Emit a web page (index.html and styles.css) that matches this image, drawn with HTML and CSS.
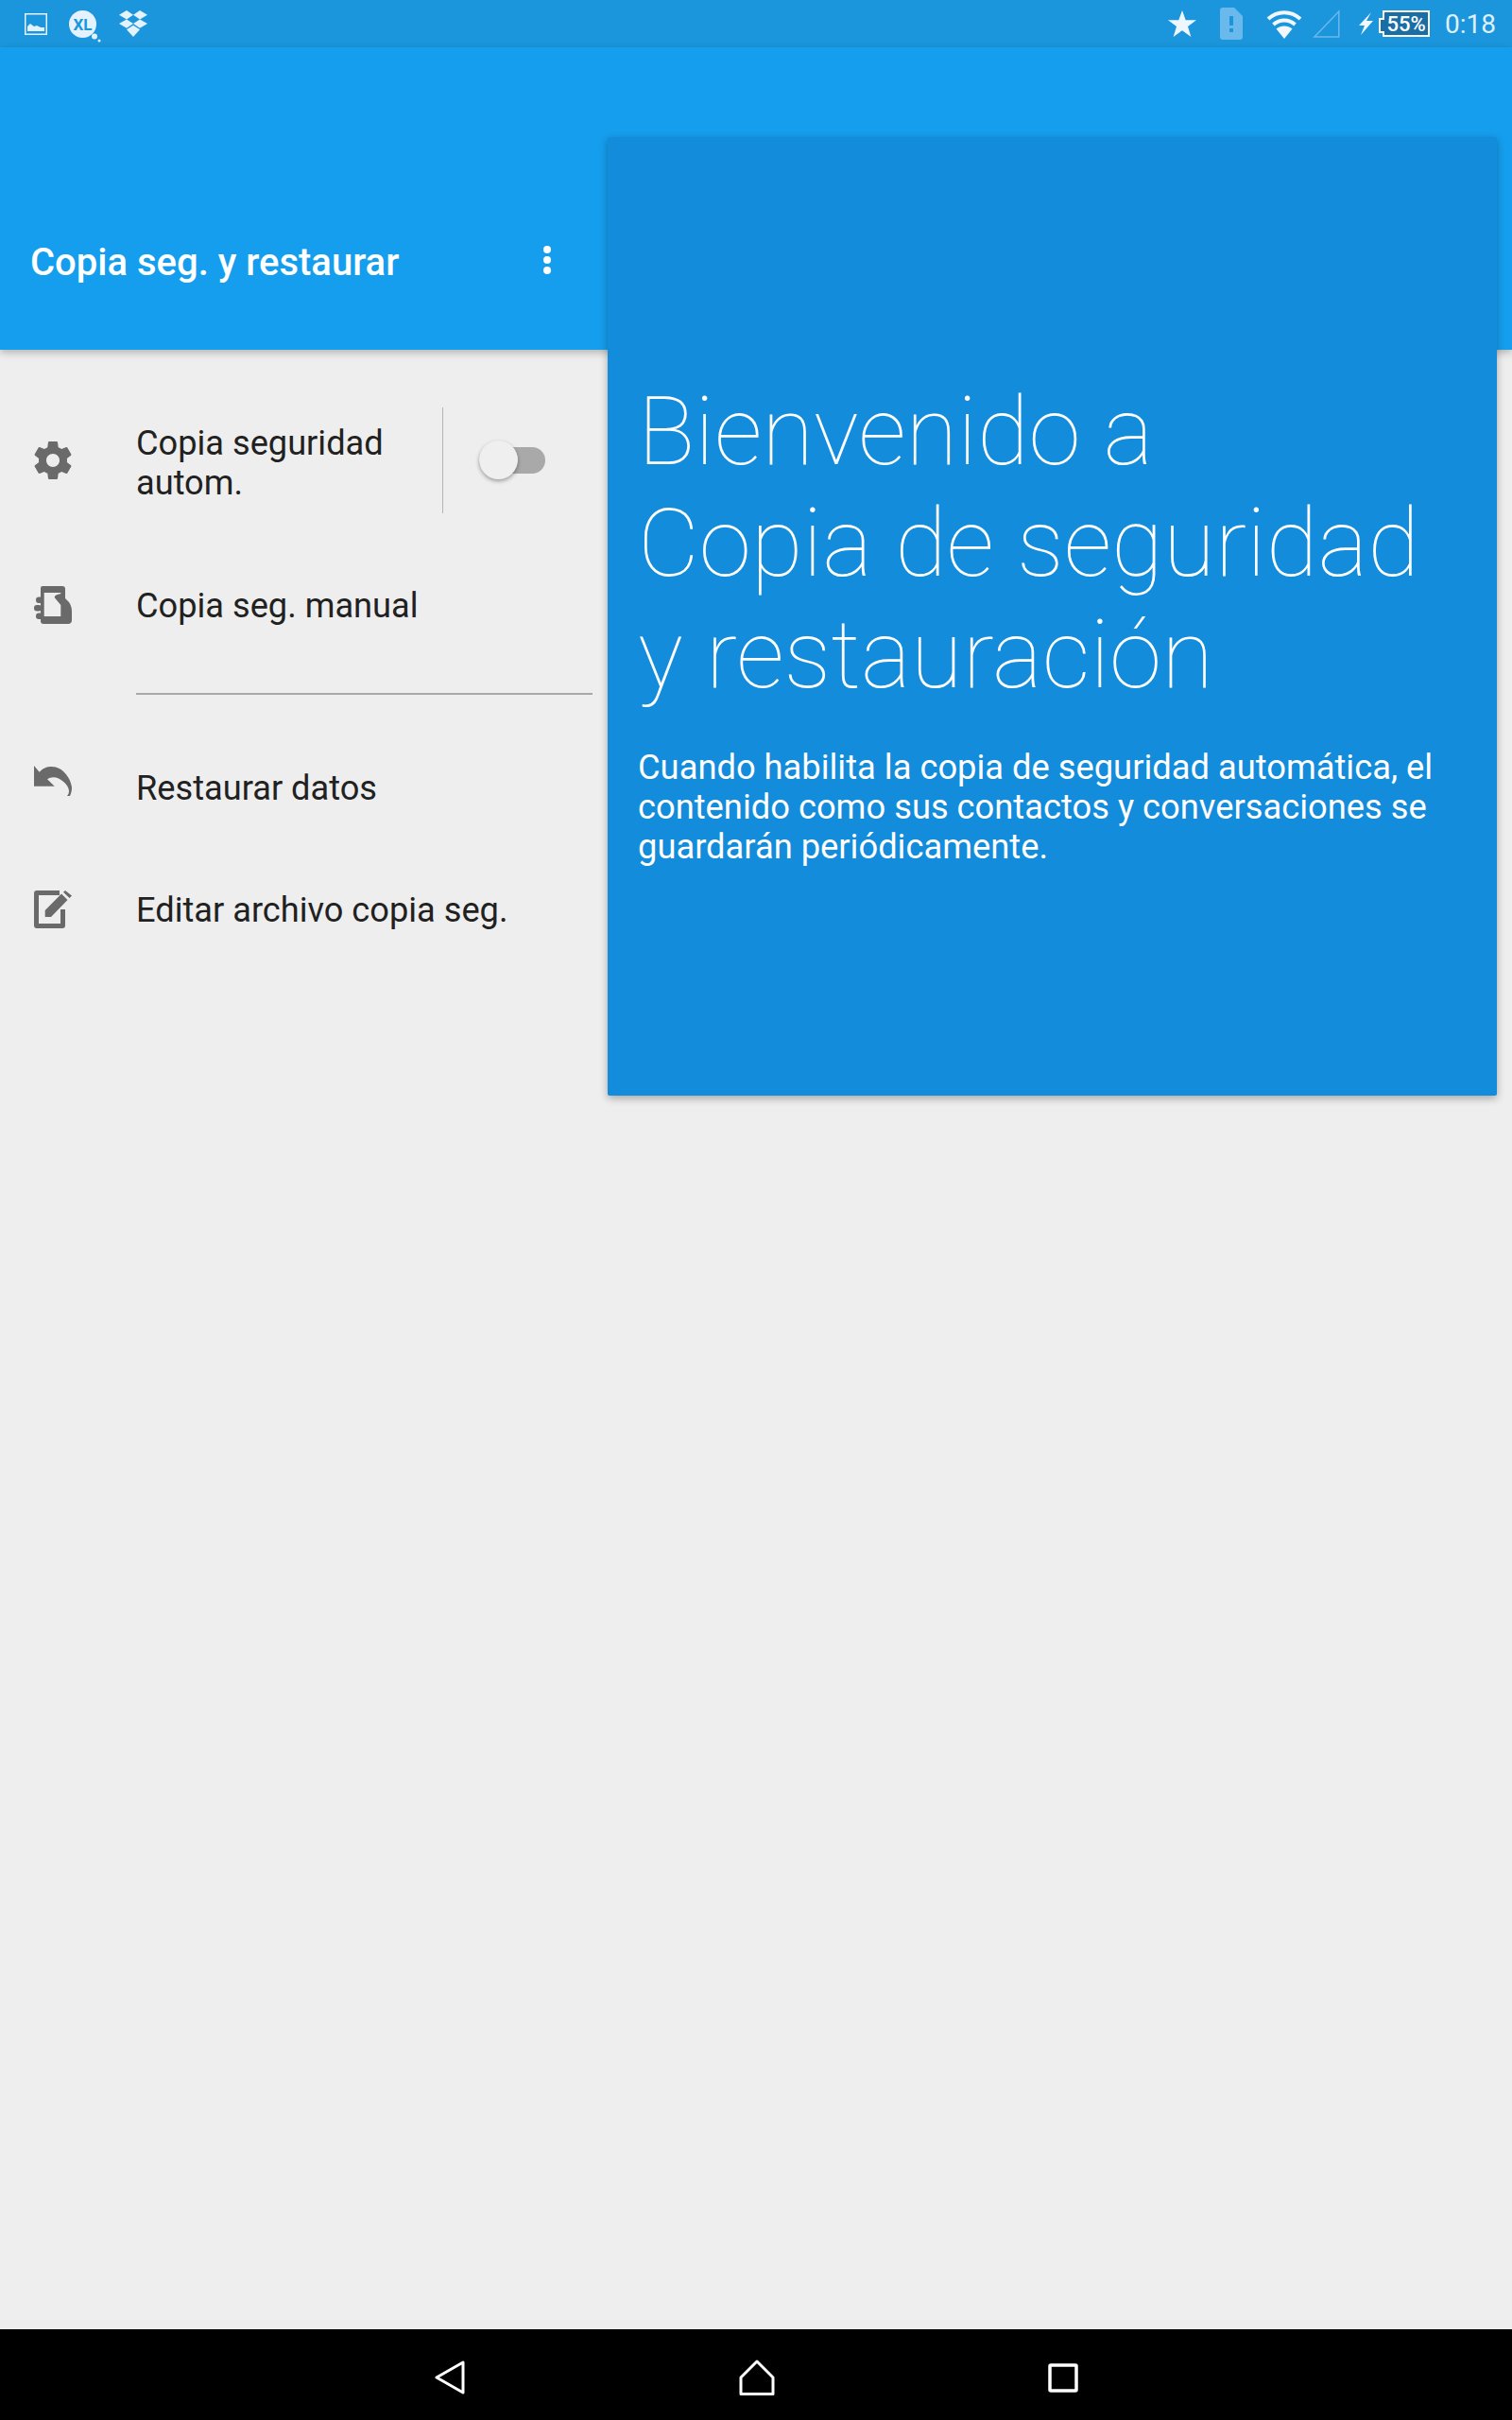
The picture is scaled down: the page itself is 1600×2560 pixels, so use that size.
FILE: index.html
```html
<!DOCTYPE html>
<html lang="es">
<head>
    <meta charset="UTF-8">
    <title>Copia seg. y restaurar</title>
    <link rel="stylesheet" href="styles.css">
</head>
<body>
    <div class="status-bar">
        <div class="status-left">
            <svg class="ic-image" viewBox="0 0 24 23"><path fill="none" stroke="#e3f2fc" stroke-width="1.5" d="M.75.75h22.500v21.500H.75z"/><path fill="#e3f2fc" d="M3 19v-5l3-3 4 3 3-1 4 2 4 0v4z"/></svg>
            <svg class="ic-xl" viewBox="0 0 34 34"><circle cx="14.500" cy="14.500" r="14.500" fill="#e3f2fc"/><circle cx="27" cy="27.500" r="3" fill="#e3f2fc"/><circle cx="32" cy="32" r="1.500" fill="#e3f2fc"/><text x="14.500" y="20.500" text-anchor="middle" class="xl-text">XL</text></svg>
            <svg class="ic-dropbox" viewBox="0 0 30 28"><path fill="#e3f2fc" d="M8 0l7 4.700-7 4.700-8-4.700zM22 0l8 4.700-8 4.700-7-4.700zM0 14.100l8-4.700 7 4.700-7 4.700zM22 9.400l8 4.700-8 4.700-7-4.700zM8 20.200l7-4.500 7 4.500-7 7.800z"/></svg>
        </div>
        <div class="status-right">
            <svg class="ic-star" viewBox="0 0 30 28"><path fill="#eef7fd" d="M15 0l3.700 10.200H30l-9 6.700 3.400 11L15 21.200 5.600 27.900l3.400-11-9-6.700h11.300z"/></svg>
            <svg class="ic-sd" viewBox="0 0 24 34"><path fill="#6ab9ec" d="M3 0h12l9 9v22a3 3 0 0 1-3 3H3a3 3 0 0 1-3-3V3a3 3 0 0 1 3-3z"/><path fill="#1b96dc" d="M10 9h4v10h-4zM10 22h4v4h-4z"/></svg>
            <svg class="ic-wifi" viewBox="0 0 38 31"><path fill="none" stroke="#f0f8fd" stroke-width="4" d="M2 10c10-9 24-9 34 0M7.500 16c7-6 16-6 23 0"/><path fill="#f0f8fd" d="M10.500 20.500c5-4 12-4 17 0L19 31z"/></svg>
            <svg class="ic-signal" viewBox="0 0 29 30"><path fill="none" stroke="#6ab9ec" stroke-width="1.500" d="M27.800 2v27H2z"/></svg>
            <svg class="ic-bolt" viewBox="0 0 16 24"><path fill="#f0f8fd" d="M14 0L1 14h6L3 24 16 9H9z"/></svg>
            <div class="battery"><span class="battery-text">55%</span></div>
            <span class="clock">0:18</span>
        </div>
    </div>

    <header class="app-bar">
        <h1 class="app-title">Copia seg. y restaurar</h1>
        <div class="overflow-menu">
            <span class="dot"></span>
            <span class="dot"></span>
            <span class="dot"></span>
        </div>
    </header>

    <main class="content">
        <div class="menu">
            <div class="row row-auto">
                <svg class="row-icon" viewBox="2.500 2 19 20"><path d="M19.430 12.980c.04-.32.07-.64.07-.98s-.03-.66-.07-.98l2.110-1.650c.19-.15.24-.42.12-.64l-2-3.460c-.12-.22-.39-.3-.61-.22l-2.490 1c-.52-.4-1.080-.73-1.690-.98l-.38-2.650C14.460 2.180 14.250 2 14 2h-4c-.25 0-.46.18-.49.42l-.38 2.650c-.61.25-1.170.59-1.690.98l-2.490-1c-.23-.09-.49 0-.61.22l-2 3.460c-.13.22-.07.49.12.64l2.110 1.650c-.04.32-.07.65-.07.98s.03.66.07.98l-2.110 1.650c-.19.15-.24.42-.12.64l2 3.460c.12.22.39.3.61.22l2.490-1c.52.4 1.080.73 1.690.98l.38 2.650c.03.24.24.42.49.42h4c.25 0 .46-.18.49-.42l.38-2.650c.61-.25 1.170-.59 1.690-.98l2.490 1c.23.09.49 0 .61-.22l2-3.460c.12-.22.07-.49-.12-.64l-2.110-1.650zM12 15.500c-1.930 0-3.500-1.570-3.500-3.500s1.570-3.500 3.500-3.500 3.500 1.570 3.500 3.500-1.570 3.500-3.500 3.500z"/></svg>
                <span class="row-label row-label-auto">Copia seguridad<br>autom.</span>
                <span class="v-divider"></span>
                <span class="switch"><span class="switch-thumb"></span></span>
            </div>
            <div class="row row-manual">
                <svg class="row-icon" viewBox="0 0 40 40"><rect x="2" y="11.500" width="8" height="6.500" rx="3"/><rect x="0" y="20" width="8" height="6.500" rx="3"/><rect x="2" y="28.500" width="8" height="6.500" rx="3"/><path fill-rule="evenodd" d="M9 0h21a3 3 0 0 1 3 3v10l4 4c2 3 3 6 3 10v9a4 4 0 0 1-4 4H10a3 3 0 0 1-3-3V2a2 2 0 0 1 2-2zM10.700 7v25h17.600V20L22 12.500c-1-2.500 2-3.500 6.300-4.500V7z"/></svg>
                <span class="row-label">Copia seg. manual</span>
            </div>
            <hr class="h-divider">
            <div class="row row-restore">
                <svg class="row-icon row-icon-undo" viewBox="0 0 40 32"><path d="M0 0v21.700h21.700L14 14.300c3-2.300 8-2.800 12-.8 6 3 11 8.500 11 13.500 0 2-1 4-2 5h3c1.500-3 2-6 2-9C39 13 30 1 19 1 13 1 9 3 5.700 6.700z"/></svg>
                <span class="row-label">Restaurar datos</span>
            </div>
            <div class="row row-edit">
                <svg class="row-icon" viewBox="0 0 40 40"><path d="M3 0h24v5H5v30h23V20h5v17a3 3 0 0 1-3 3H3a3 3 0 0 1-3-3V3a3 3 0 0 1 3-3z"/><path d="M11.700 21L29 3.500l6.500 6.500L18 28h-6.300zM31 1.800L33 0l7 5.500L37.500 8z"/></svg>
                <span class="row-label">Editar archivo copia seg.</span>
            </div>
        </div>

        <section class="welcome">
            <h2 class="welcome-title">Bienvenido a<br>Copia de seguridad<br>y restauración</h2>
            <p class="welcome-text">Cuando habilita la copia de seguridad automática, el contenido como sus contactos y conversaciones se guardarán periódicamente.</p>
        </section>
    </main>

    <nav class="nav-bar">
        <svg class="nav-back" viewBox="0 0 32 36"><path fill="none" stroke="#fff" stroke-width="3" stroke-linejoin="round" d="M30 2v32L2 18z"/></svg>
        <svg class="nav-home" viewBox="0 0 38 38"><path fill="none" stroke="#fff" stroke-width="3" stroke-linejoin="round" d="M19 2L36 19v17.500H2V19z"/></svg>
        <svg class="nav-recent" viewBox="0 0 32 31"><rect x="2" y="2" width="28" height="27" rx="1" fill="none" stroke="#fff" stroke-width="3.500"/></svg>
    </nav>
</body>
</html>
```

FILE: styles.css
```css
* {
    margin: 0;
    padding: 0;
    box-sizing: border-box;
}

body {
    font-family: Roboto, "Liberation Sans", sans-serif;
    width: 1600px;
    height: 2560px;
    background: #eeeeee;
    display: flex;
    flex-direction: column;
    overflow: hidden;
}

/* status bar */
.status-bar {
    height: 50px;
    background: #1b96dc;
    display: flex;
    justify-content: space-between;
    align-items: center;
    padding: 0 17px 0 26px;
    flex-shrink: 0;
}

.status-left,
.status-right {
    display: flex;
    align-items: center;
}

.ic-image {
    width: 24px;
    height: 23px;
}

.ic-xl {
    width: 34px;
    height: 34px;
    margin-left: 23px;
    margin-top: 6px;
}

.xl-text {
    font-family: Roboto, sans-serif;
    font-size: 17px;
    font-weight: 700;
    fill: #1b96dc;
}

.ic-dropbox {
    width: 30px;
    height: 28px;
    margin-left: 19px;
}

.ic-star {
    width: 30px;
    height: 28px;
}

.ic-sd {
    width: 24px;
    height: 34px;
    margin-left: 25px;
}

.ic-wifi {
    width: 38px;
    height: 31px;
    margin-left: 25px;
}

.ic-signal {
    width: 29px;
    height: 30px;
    margin-left: 11px;
}

.ic-bolt {
    width: 16px;
    height: 24px;
    margin-left: 19px;
}

.battery {
    width: 50px;
    height: 28px;
    margin-left: 10px;
    background: #1a6ea6;
    border: 2px solid #fff;
    display: flex;
    align-items: center;
    justify-content: center;
    position: relative;
}

.battery::before {
    content: "";
    position: absolute;
    left: -6px;
    top: 6px;
    width: 4px;
    height: 12px;
    background: #1a6ea6;
    border: 2px solid #fff;
    border-right: 0;
}

.battery-text {
    font-size: 22px;
    font-weight: 500;
    color: #fff;
}

.clock {
    font-size: 28px;
    color: #dff0fb;
    margin-left: 16px;
}

/* app bar */
.app-bar {
    height: 320px;
    background: #159eee;
    box-shadow: 0 3px 8px rgba(0, 0, 0, 0.25);
    display: flex;
    align-items: flex-end;
    padding: 0 0 67px 32px;
    flex-shrink: 0;
    position: relative;
}

.app-title {
    width: 543px;
    font-size: 40px;
    font-weight: 500;
    color: #fff;
    line-height: 50px;
}

.overflow-menu {
    display: flex;
    flex-direction: column;
    gap: 3px;
    margin-bottom: 13px;
}

.dot {
    width: 8px;
    height: 8px;
    background: #fff;
    border-radius: 50%;
}

/* list */
.content {
    flex: 1;
    position: relative;
}

.menu {
    width: 627px;
    padding: 61px 0 0 36px;
}

.row {
    display: flex;
    align-items: center;
    height: 112px;
}

.row-manual {
    margin-top: 41px;
}

.row-restore {
    margin-top: 42px;
}

.row-edit {
    margin-top: 17px;
}

.row-icon {
    width: 40px;
    height: 40px;
    fill: #6a6a6a;
    flex-shrink: 0;
}

.row-icon-undo {
    height: 32px;
    margin-top: -14px;
}

.row-label {
    margin-left: 68px;
    font-size: 36.200px;
    line-height: 42px;
    color: #212121;
    padding-top: 2px;
}

.row-label-auto {
    width: 324px;
    padding-top: 6px;
}

.v-divider {
    width: 1px;
    height: 112px;
    background: #b4b4b4;
}

.switch {
    margin-left: 38px;
    width: 70px;
    height: 28px;
    background: #a9a9a9;
    border-radius: 14px;
    position: relative;
}

.switch-thumb {
    position: absolute;
    left: 0;
    top: -7px;
    width: 41px;
    height: 41px;
    background: #efefef;
    border-radius: 50%;
    box-shadow: 0 2px 4px rgba(0, 0, 0, 0.35);
}

.h-divider {
    border: 0;
    height: 2px;
    background: #a8a8a8;
    margin: 37px 0 0 108px;
}

/* welcome panel, sits over the app bar */
.welcome {
    position: absolute;
    left: 643px;
    top: -225px;
    width: 941px;
    height: 1014px;
    background: #138cdb;
    border-radius: 2px;
    box-shadow: 0 3px 8px rgba(0, 0, 0, 0.3);
    padding: 253px 20px 0 32px;
    color: #fff;
}

.welcome-title {
    font-size: 100px;
    font-weight: 100;
    line-height: 118px;
}

.welcome-text {
    margin-top: 39px;
    font-size: 36.300px;
    line-height: 42px;
}

/* nav bar */
.nav-bar {
    height: 96px;
    background: #000;
    flex-shrink: 0;
    display: flex;
    align-items: center;
    padding: 6px 0 0 460px;
}

.nav-back {
    width: 32px;
    height: 36px;
}

.nav-home {
    width: 38px;
    height: 38px;
    margin-left: 290px;
}

.nav-recent {
    width: 32px;
    height: 31px;
    margin-left: 289px;
}
```
